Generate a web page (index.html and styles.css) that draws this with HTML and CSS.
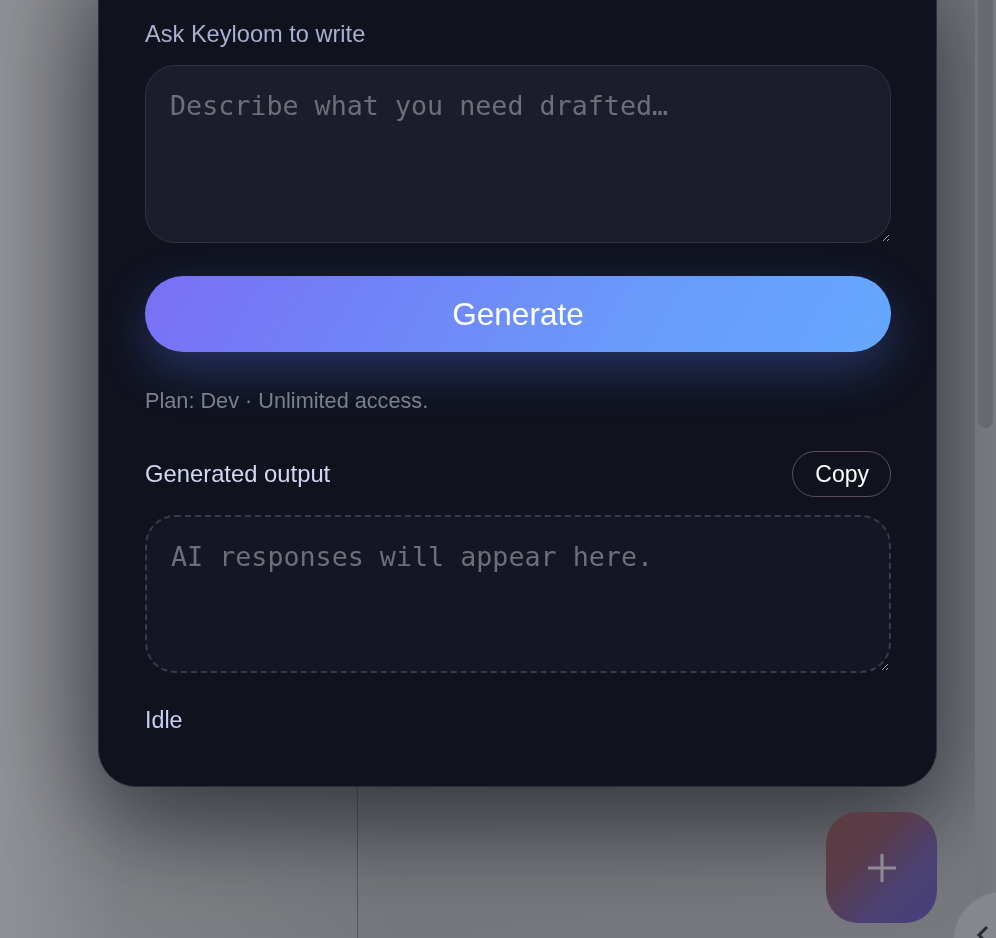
FILE: index.html
```html
<!DOCTYPE html>
<html lang="en">
<head>
<meta charset="utf-8">
<title>Keyloom</title>
<link rel="stylesheet" href="styles.css">
</head>
<body>
<div class="page">
  <aside class="page-side"></aside>
  <main class="page-main"></main>
</div>

<div class="backdrop">
  <section class="panel">
    <label class="field-label" for="prompt">Ask Keyloom to write</label>
    <textarea id="prompt" class="prompt" placeholder="Describe what you need drafted…"></textarea>
    <button class="generate" type="button">Generate</button>
    <p class="plan">Plan: Dev · Unlimited access.</p>
    <div class="output-head">
      <span class="output-label">Generated output</span>
      <button class="copy" type="button">Copy</button>
    </div>
    <textarea class="output" readonly placeholder="AI responses will appear here."></textarea>
    <p class="status">Idle</p>
  </section>
</div>

<div class="scrollbar"><div class="scrollbar-thumb"></div></div>

<button class="fab" type="button" aria-label="New">
  <svg width="34" height="34" viewBox="0 0 34 34"><path d="M17 3v28M3 17h28" stroke="#8e8d94" stroke-width="3" fill="none"/></svg>
</button>

<div class="side-toggle" role="button" aria-label="Collapse">
  <svg width="20" height="24" viewBox="0 0 20 24"><path d="M12 3L4 11l8 8" stroke="#2a2c33" stroke-width="3" fill="none"/></svg>
</div>
</body>
</html>
```

FILE: styles.css
```css
* { box-sizing: border-box; }

html, body {
  margin: 0;
  height: 100%;
  overflow: hidden;
}

body {
  font-family: "Liberation Sans", Arial, sans-serif;
  background: #808287;
}

.page {
  display: grid;
  grid-template-columns: 358px 1fr;
  height: 100vh;
  background: linear-gradient(90deg, #909196 0%, #7f8186 12%, #75777c 40%, #77797e 100%);
}

.page-side {
  border-right: 1px solid #56585e;
}

.backdrop {
  position: fixed;
  inset: 0;
  padding-left: 98px;
}

.panel {
  width: 839px;
  margin-top: -40px;
  padding: 60px 45px 53px 46px;
  background: #10121e;
  border: 1px solid #2c2e3a;
  border-radius: 38px;
  box-shadow: 0 40px 90px rgba(20, 22, 30, 0.55), 0 0 120px rgba(20, 22, 30, 0.25);
  display: flex;
  flex-direction: column;
}

.field-label {
  display: block;
  font-size: 23.6px;
  line-height: 26px;
  color: #a9afcf;
}

.prompt,
.output {
  display: block;
  width: 100%;
  margin: 0;
  font-family: "DejaVu Sans Mono", "Liberation Mono", monospace;
  font-size: 26.7px;
  line-height: 40px;
  color: #d7d9e4;
  border-radius: 30px;
  outline: none;
}

.prompt::placeholder,
.output::placeholder {
  color: #6c6f79;
}

.prompt {
  margin-top: 18px;
  height: 178px;
  padding: 20px 24px;
  background: #1b1e2a;
  border: 1px solid #2f3241;
}

.generate {
  margin-top: 33px;
  height: 76px;
  width: 100%;
  border: 0;
  border-radius: 38px;
  background: linear-gradient(120deg, #7a70f5 0%, #7182f7 30%, #6a9afc 65%, #64a8ff 100%);
  color: #ffffff;
  font-family: "Liberation Sans", Arial, sans-serif;
  font-size: 31.5px;
  box-shadow: 0 18px 48px rgba(80, 120, 240, 0.32);
  cursor: pointer;
}

.plan {
  margin: 36px 0 0;
  font-size: 21.7px;
  line-height: 26px;
  color: #7c808c;
}

.output-head {
  margin-top: 37px;
  height: 46px;
  display: flex;
  align-items: center;
  justify-content: space-between;
}

.output-label {
  font-size: 23.8px;
  color: #d3d7f3;
}

.copy {
  height: 46px;
  padding: 0 21px 0 22px;
  border: 1.5px solid #5e4c60;
  border-radius: 23px;
  background: transparent;
  color: #ffffff;
  font-family: "Liberation Sans", Arial, sans-serif;
  font-size: 23px;
}

.output {
  margin-top: 18px;
  height: 158px;
  padding: 20px 24px;
  background: #141723;
  border: 2px dashed #373a48;
}

.status {
  margin: 34px 0 0;
  font-size: 23.3px;
  line-height: 26px;
  color: #c9cef6;
}

.fab {
  position: fixed;
  left: 826px;
  top: 812px;
  width: 111px;
  height: 111px;
  padding: 0;
  border: 0;
  border-radius: 32px;
  background: linear-gradient(135deg, #5d3b40 0%, #5a3c4a 35%, #4b4170 65%, #463f7c 100%);
  display: flex;
  align-items: center;
  justify-content: center;
}

.side-toggle {
  position: fixed;
  left: 953px;
  top: 891px;
  width: 100px;
  height: 100px;
  padding: 32px 0 0 21px;
  border: 1px solid #7b7d83;
  border-radius: 50%;
  background: #85878c;
}

.scrollbar {
  position: fixed;
  top: 0;
  right: 0;
  width: 21px;
  height: 100%;
  background: linear-gradient(90deg, #72757a, #777a7f);
}

.scrollbar-thumb {
  margin-left: 3px;
  width: 15px;
  height: 428px;
  background: #676a70;
  border-radius: 0 0 8px 8px;
}
```
